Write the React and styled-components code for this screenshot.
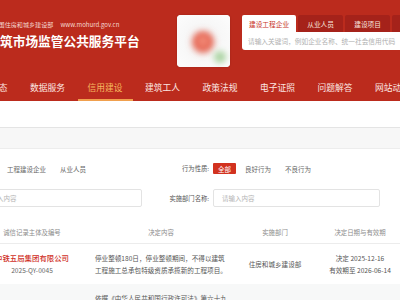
import React from "react";
import styled, { createGlobalStyle } from "styled-components";

const GlobalStyle = createGlobalStyle`
  html, body {
    margin: 0;
    padding: 0;
    background: #ffffff;
  }
  body {
    width: 400px;
    height: 300px;
    overflow: hidden;
    font-family: "Noto Sans CJK SC", "Noto Sans", sans-serif;
  }
`;

// the page is wider than the window and scrolled a little to the right
const Page = styled.div`
  width: 560px;
  margin-left: -80px;
`;

const Header = styled.header`
  background: #bb2b1d;
`;

const Top = styled.div`
  height: 73px;
  display: flex;
  align-items: flex-start;
  padding-left: 42px;
`;

const Brand = styled.div`
  width: 178px;
  padding-top: 21px;
  white-space: nowrap;
`;

const Sub = styled.div`
  display: flex;
  gap: 7px;
  font-size: 6.1px;
  line-height: 8px;
  color: #f5d8d2;
`;

const Title = styled.h1`
  margin: 4px 0 0;
  font-size: 12.7px;
  line-height: 16px;
  font-weight: 700;
  color: #ffffff;
`;

const Badge = styled.div`
  width: 53px;
  height: 52px;
  margin: 15px 0 0 37px;
  border-radius: 4px;
  overflow: hidden;
  background: #f6f6f6;
  box-shadow: 0 0 2px rgba(0, 0, 0, 0.2);
  & svg {
    display: block;
  }
`;

const Search = styled.div`
  flex: 1;
  margin: 15px 0 0 12px;
`;

const Tabs = styled.div`
  display: flex;
  gap: 2px;
  height: 17px;
`;

const Tab = styled.div`
  min-width: 45px;
  padding: 0 7px;
  box-sizing: border-box;
  display: flex;
  align-items: center;
  justify-content: center;
  font-size: 6.7px;
  border-radius: 2px 2px 0 0;
  background: ${(p) => (p.$active ? "#ffffff" : "#a5221a")};
  color: ${(p) => (p.$active ? "#c8321f" : "#f7e2de")};
`;

const SearchInput = styled.div`
  height: 18px;
  background: #ffffff;
  border-radius: 0 0 3px 3px;
  padding-left: 6px;
  display: flex;
  align-items: center;
  font-size: 6.7px;
  color: #b0b0b0;
  white-space: nowrap;
`;

const Nav = styled.nav`
  height: 28px;
  display: flex;
  gap: 2.5px;
  padding-left: 42.5px;
`;

const NavItem = styled.div`
  width: 55px;
  flex-shrink: 0;
  display: flex;
  align-items: center;
  justify-content: center;
  font-size: 8.75px;
  white-space: nowrap;
  color: ${(p) => (p.$active ? "#f6b75f" : "#fbe6e2")};
  box-shadow: ${(p) => (p.$active ? "inset 0 -2px 0 #f0a04e" : "none")};
`;

const Crumbs = styled.div`
  margin-top: 26px;
  height: 20px;
  background: #f7f7f7;
  border-top: 1px solid #e4e4e4;
  border-bottom: 1px solid #ededed;
`;

const Filters = styled.div`
  padding: 14px 0 0 6px;
  display: flex;
  flex-direction: column;
  gap: 15px;
`;

const FilterRow = styled.div`
  display: flex;
  gap: 22px;
  align-items: center;
`;

const FilterGroup = styled.div`
  width: 216px;
  display: flex;
  align-items: center;
  gap: 4px;
`;

const Label = styled.div`
  width: 45px;
  flex-shrink: 0;
  text-align: right;
  font-size: 6.3px;
  color: #555555;
  white-space: nowrap;
`;

const Options = styled.div`
  flex: 1;
  display: flex;
  gap: 4px;
`;

const Option = styled.div`
  height: 11px;
  padding: 0 5px;
  display: flex;
  align-items: center;
  font-size: 6.5px;
  border-radius: 1px;
  white-space: nowrap;
  background: ${(p) => (p.$active ? "#d2321f" : "transparent")};
  color: ${(p) => (p.$active ? "#ffffff" : "#666666")};
`;

const Field = styled.div`
  flex: 1;
  height: 18px;
  box-sizing: border-box;
  border: 1px solid #e3e3e3;
  border-radius: 2px;
  padding-left: 8px;
  display: flex;
  align-items: center;
  font-size: 6.5px;
  color: #b4b4b4;
  white-space: nowrap;
`;

const Table = styled.div`
  margin: 15px 0 0 54px;
  width: 428px;
`;

const Row = styled.div`
  display: grid;
  grid-template-columns: 116px 142px 86px 84px;
  align-items: center;
  min-height: ${(p) => (p.$head ? "22px" : "39px")};
  padding: ${(p) => (p.$head ? "0" : "7.5px 0")};
  box-sizing: border-box;
  background: ${(p) => (p.$shade ? "#f7f8f8" : "#ffffff")};
  border-bottom: 1px solid ${(p) => (p.$head ? "#ececec" : "transparent")};
`;

const HeadCell = styled.div`
  text-align: center;
  font-size: 6.4px;
  color: #8c8c8c;
  white-space: nowrap;
`;

const Cell = styled.div`
  text-align: ${(p) => (p.$left ? "left" : "center")};
  padding: ${(p) => (p.$left ? "0 3px 0 5px" : "0")};
  font-size: 6.6px;
  line-height: 12px;
  color: #555555;
  white-space: ${(p) => (p.$left ? "normal" : "nowrap")};
`;

const Name = styled.div`
  font-size: 7.4px;
  font-weight: 500;
  color: #d0301f;
`;

const Code = styled.div`
  color: #666666;
`;

const Emblem = () => (
  <svg width="53" height="52" viewBox="0 0 53 52">
    <defs>
      <filter id="soft" x="-50%" y="-50%" width="200%" height="200%">
        <feGaussianBlur stdDeviation="3" />
      </filter>
      <radialGradient id="paper" cx="50%" cy="50%" r="60%">
        <stop offset="0%" stopColor="#f2f2f2" />
        <stop offset="100%" stopColor="#fbfbfb" />
      </radialGradient>
    </defs>
    <rect width="53" height="52" fill="url(#paper)" />
    <circle cx="26" cy="27" r="11" fill="#e66a58" filter="url(#soft)" />
    <circle cx="26" cy="26" r="5" fill="#f28b78" filter="url(#soft)" />
    <circle cx="43" cy="42" r="6" fill="#a9d3a0" filter="url(#soft)" />
  </svg>
);

const navItems = [
  "行业动态",
  "数据服务",
  "信用建设",
  "建筑工人",
  "政策法规",
  "电子证照",
  "问题解答",
  "网站动态",
];

const App = () => (
  <Page>
    <GlobalStyle />
    <Header>
      <Top>
        <Brand>
          <Sub>
            <span>中华人民共和国住房和城乡建设部</span>
            <span>www.mohurd.gov.cn</span>
          </Sub>
          <Title>全国建筑市场监管公共服务平台</Title>
        </Brand>
        <Badge>
          <Emblem />
        </Badge>
        <Search>
          <Tabs>
            <Tab $active>建设工程企业</Tab>
            <Tab>从业人员</Tab>
            <Tab>建设项目</Tab>
            <Tab>诚信记录</Tab>
          </Tabs>
          <SearchInput>请输入关键词，例如企业名称、统一社会信用代码</SearchInput>
        </Search>
      </Top>
      <Nav>
        {navItems.map((item) => (
          <NavItem key={item} $active={item === "信用建设"}>
            {item}
          </NavItem>
        ))}
      </Nav>
    </Header>

    <Crumbs />

    <Filters>
      <FilterRow>
        <FilterGroup>
          <Label>主体类型:</Label>
          <Options>
            <Option>全部</Option>
            <Option>工程建设企业</Option>
            <Option>从业人员</Option>
          </Options>
        </FilterGroup>
        <FilterGroup>
          <Label>行为性质:</Label>
          <Options>
            <Option $active>全部</Option>
            <Option>良好行为</Option>
            <Option>不良行为</Option>
          </Options>
        </FilterGroup>
      </FilterRow>
      <FilterRow>
        <FilterGroup>
          <Label>主体名称:</Label>
          <Field>请输入内容</Field>
        </FilterGroup>
        <FilterGroup>
          <Label>实施部门名称:</Label>
          <Field>请输入内容</Field>
        </FilterGroup>
      </FilterRow>
    </Filters>

    <Table>
      <Row $head>
        <HeadCell>诚信记录主体及编号</HeadCell>
        <HeadCell>决定内容</HeadCell>
        <HeadCell>实施部门</HeadCell>
        <HeadCell>决定日期与有效期</HeadCell>
      </Row>
      <Row>
        <Cell>
          <Name>中铁五局集团有限公司</Name>
          <Code>2025-QY-0045</Code>
        </Cell>
        <Cell $left>
          停业整顿180日，停业整顿期间，不得以建筑工程施工总承包特级资质承揽新的工程项目。
        </Cell>
        <Cell>住房和城乡建设部</Cell>
        <Cell>
          <div>决定 2025-12-16</div>
          <div>有效期至 2026-06-14</div>
        </Cell>
      </Row>
      <Row $shade>
        <Cell>
          <Name>中建三局集团有限公司</Name>
          <Code>2025-QY-0038</Code>
        </Cell>
        <Cell $left>
          依据《中华人民共和国行政许可法》第六十九条规定，撤销其建筑工程施工总承包特级资质，三年内不得重新申请。
        </Cell>
        <Cell>住房和城乡建设部</Cell>
        <Cell>
          <div>决定 2025-11-20</div>
          <div>有效期至 2028-11-19</div>
        </Cell>
      </Row>
    </Table>
  </Page>
);

export default App;
